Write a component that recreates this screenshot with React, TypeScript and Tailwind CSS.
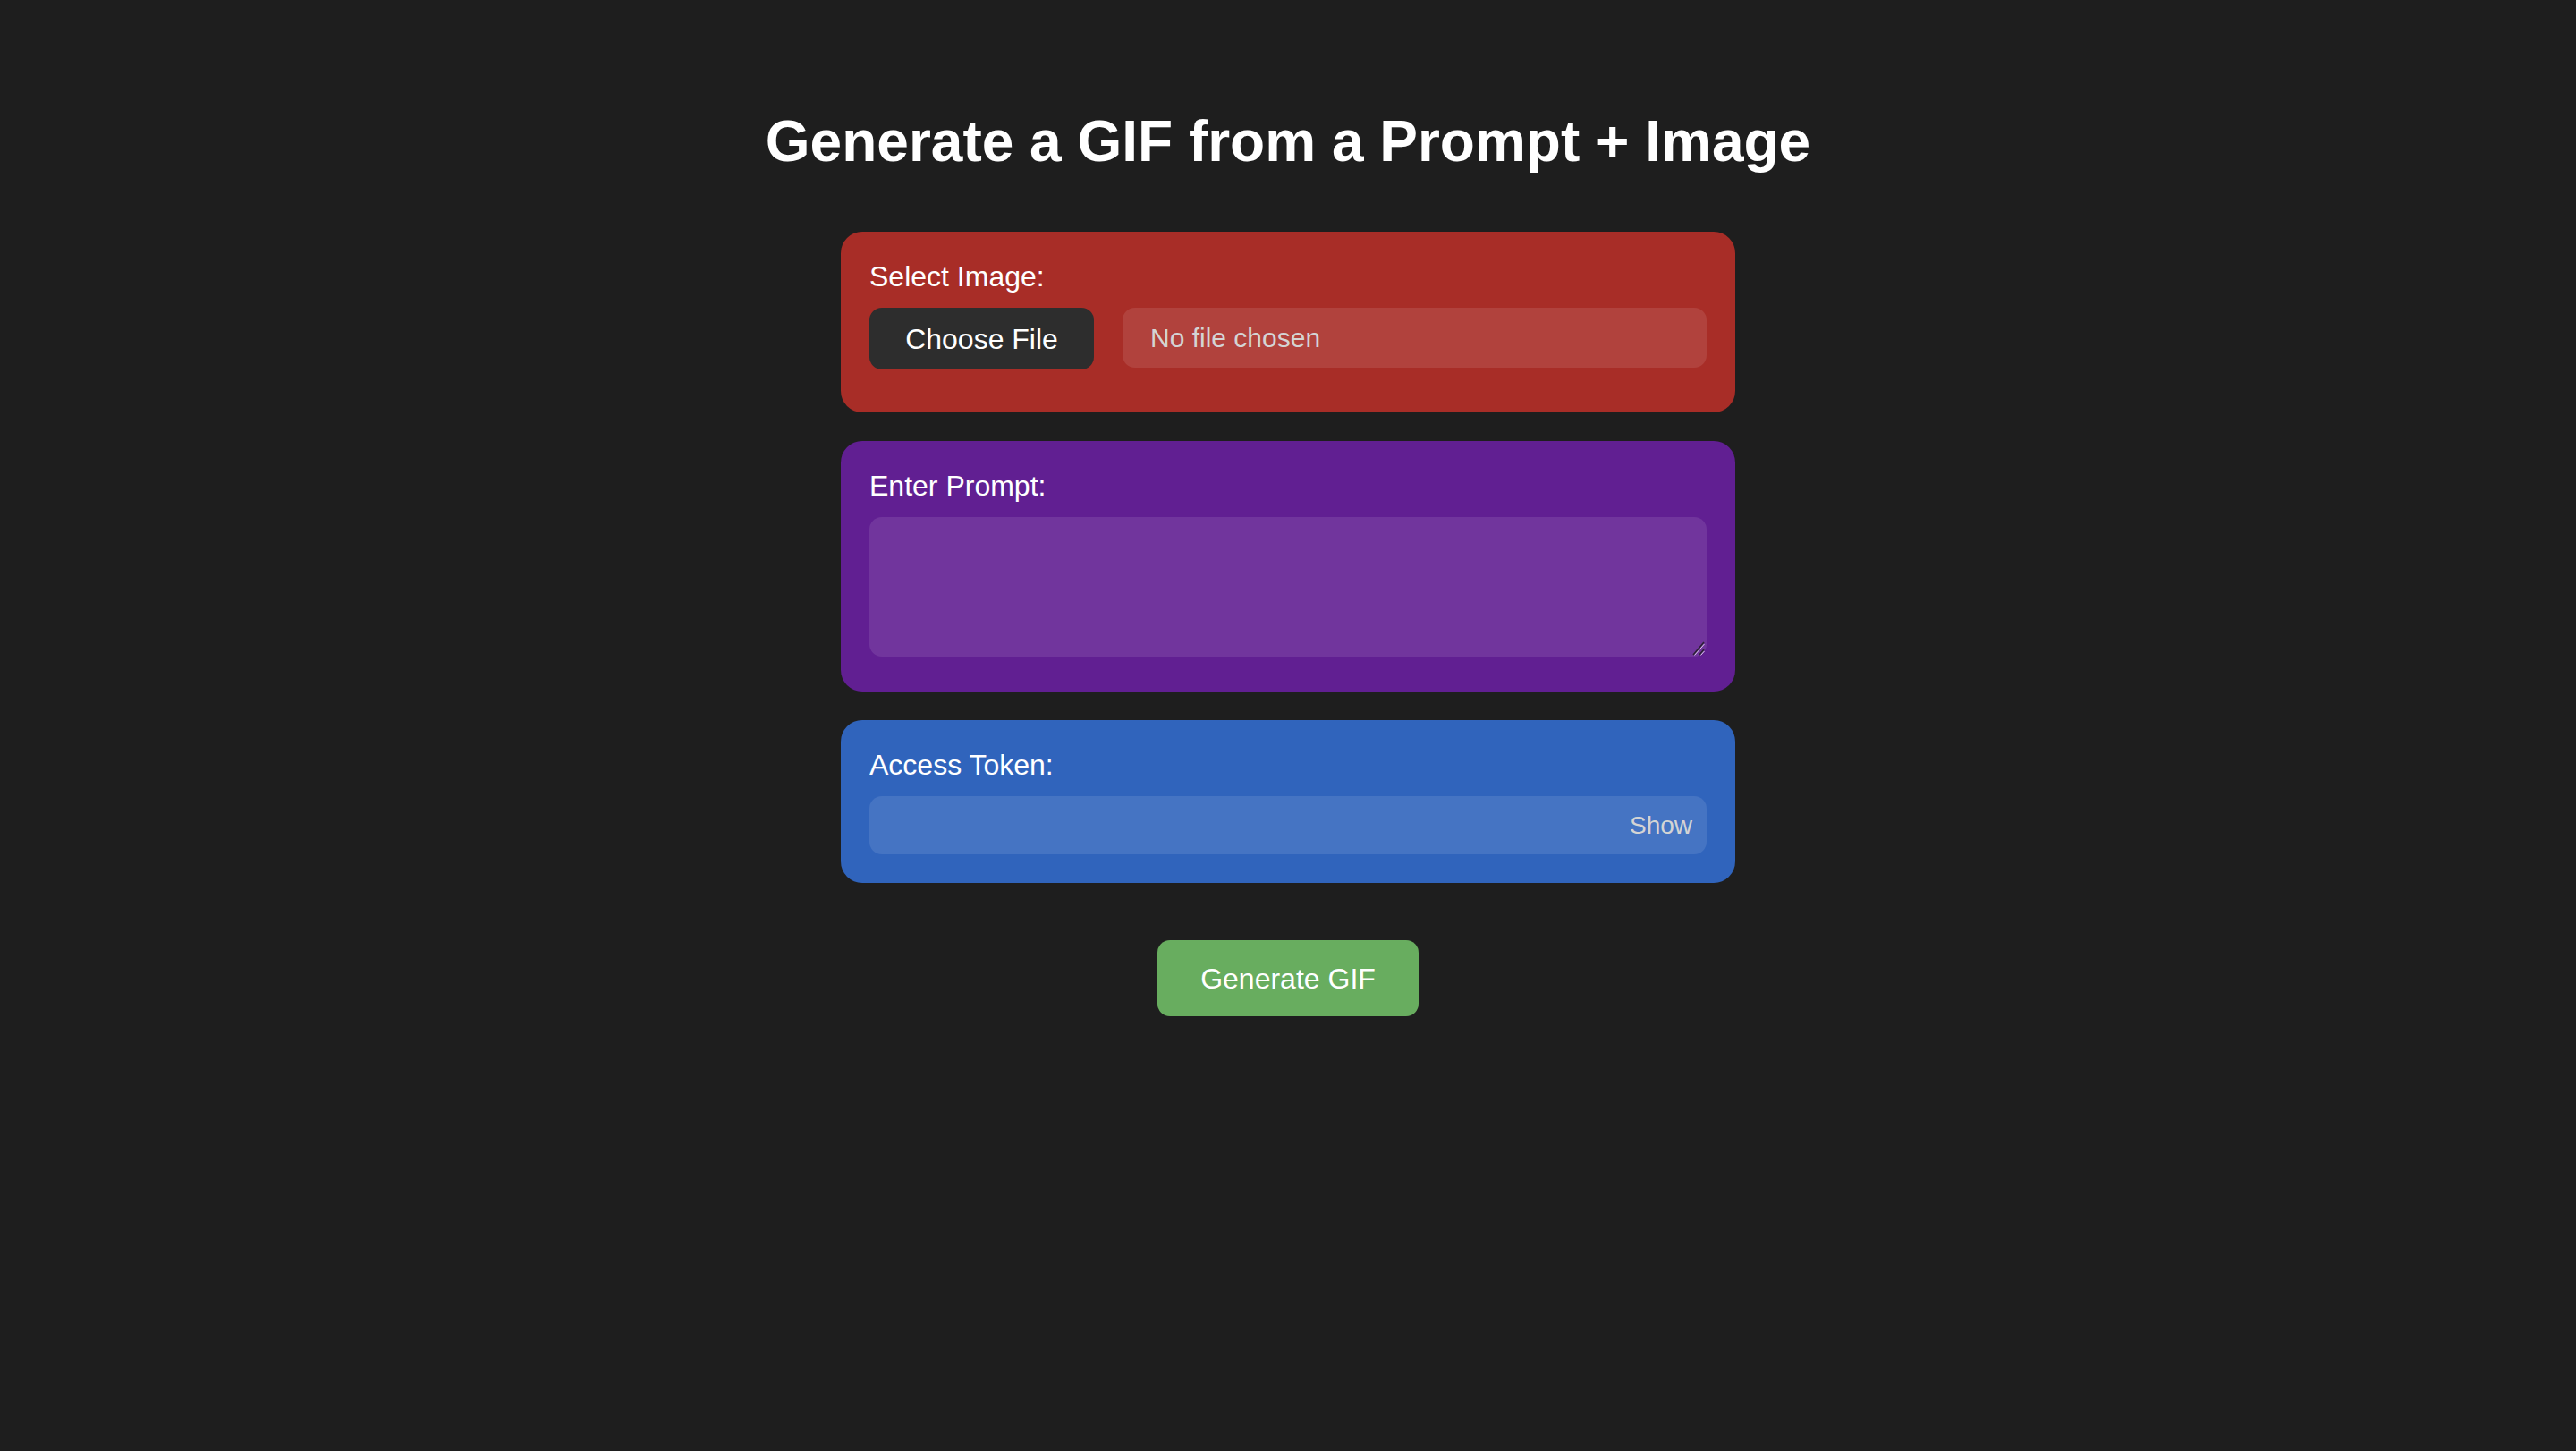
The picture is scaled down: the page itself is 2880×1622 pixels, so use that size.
import { useState } from "react";

export default function App() {
  const [prompt, setPrompt] = useState("");
  const [token, setToken] = useState("");
  const [showToken, setShowToken] = useState(false);
  const [fileName, setFileName] = useState("");

  return (
    <div
      className="min-h-screen w-full bg-[#1e1e1e] text-white flex flex-col items-center"
      style={{ fontFamily: '"Liberation Sans", Arial, Helvetica, sans-serif' }}
    >
      <h1 className="mt-[122px] mb-[65px] text-[64px] leading-[72px] font-bold">
        Generate a GIF from a Prompt + Image
      </h1>

      <div className="w-[1000px] flex flex-col gap-8">
        {/* Image */}
        <div className="bg-[#a82d27] rounded-[24px] px-8 pt-8 pb-[48px]">
          <label className="block text-[32px] leading-[37px] mb-4">Select Image:</label>
          <div className="flex items-start gap-8">
            <label className="w-[251px] h-[69px] flex items-center justify-center bg-[#2d2d2d] rounded-[14px] text-[32px] cursor-pointer">
              Choose File
              <input
                type="file"
                className="hidden"
                onChange={(e) => setFileName(e.target.files?.[0]?.name ?? "")}
              />
            </label>
            <div className="flex-1 h-[67px] flex items-center px-[31px] bg-white/10 rounded-[14px] text-[30px] text-[#d4d4d4]">
              {fileName || "No file chosen"}
            </div>
          </div>
        </div>

        {/* Prompt */}
        <div className="bg-[#611f92] rounded-[24px] px-8 pt-8 pb-[39px]">
          <label className="block text-[32px] leading-[37px] mb-4">Enter Prompt:</label>
          <div className="relative">
            <textarea
              value={prompt}
              onChange={(e) => setPrompt(e.target.value)}
              className="block w-full h-[156px] bg-white/10 rounded-[14px] p-4 text-[28px] text-white outline-none resize-none"
            />
            {/* resize grip */}
            <svg
              className="absolute right-[2px] bottom-[1px] pointer-events-none"
              width="16"
              height="16"
              viewBox="0 0 16 16"
            >
              <line x1="3" y1="15" x2="15" y2="1" stroke="#2b2233" strokeWidth="1.6" />
              <line x1="4.5" y1="15.5" x2="15.5" y2="3" stroke="#d9cde6" strokeWidth="1" />
              <line x1="10" y1="15" x2="15" y2="9" stroke="#2b2233" strokeWidth="1.6" />
              <line x1="11.5" y1="15.5" x2="15.5" y2="11" stroke="#d9cde6" strokeWidth="1" />
            </svg>
          </div>
        </div>

        {/* Token */}
        <div className="bg-[#3064bc] rounded-[24px] px-8 pt-8 pb-8">
          <label className="block text-[32px] leading-[37px] mb-4">Access Token:</label>
          <div className="h-[65px] bg-white/10 rounded-[14px] flex items-center">
            <input
              type={showToken ? "text" : "password"}
              value={token}
              onChange={(e) => setToken(e.target.value)}
              className="flex-1 h-full bg-transparent px-4 text-[28px] text-white outline-none"
            />
            <button
              onClick={() => setShowToken(!showToken)}
              className="pr-4 text-[28px] text-[#d4d4d4]"
            >
              {showToken ? "Hide" : "Show"}
            </button>
          </div>
        </div>
      </div>

      <button className="mt-16 w-[292px] h-[85px] bg-[#68ad5f] rounded-[14px] text-[32px] text-white">
        Generate GIF
      </button>
    </div>
  );
}
